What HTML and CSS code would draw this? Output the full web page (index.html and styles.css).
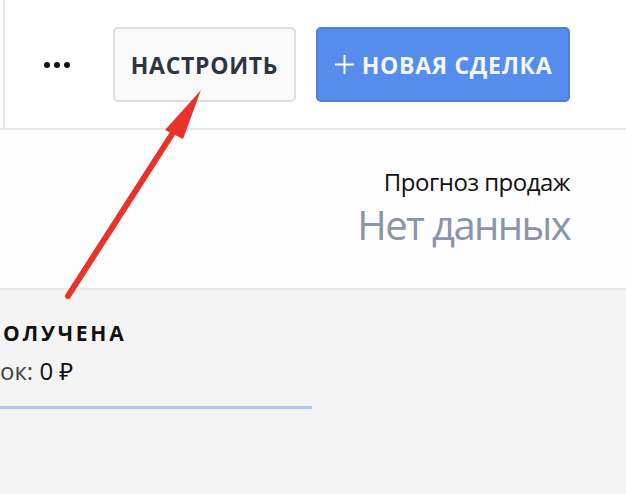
FILE: index.html
```html
<!DOCTYPE html>
<html lang="ru">
<head>
<meta charset="utf-8">
<link rel="stylesheet" href="styles.css">
</head>
<body>
<div class="page">
  <header class="topbar">
    <div class="topbar-inner">
      <button class="more" aria-label="Ещё"><span></span><span></span><span></span></button>
      <button class="btn btn-setup">НАСТРОИТЬ</button>
      <button class="btn btn-new"><svg class="plus" width="21" height="21" viewBox="0 0 21 21"><path d="M10.5 1v19M1 10.5h19" stroke="#fff" stroke-width="2"/></svg>НОВАЯ СДЕЛКА</button>
    </div>
  </header>
  <section class="summary">
    <div class="forecast">
      <div class="forecast-label">Прогноз продаж</div>
      <div class="forecast-value">Нет данных</div>
    </div>
  </section>
  <section class="board">
    <div class="column">
      <div class="column-title">ОЛУЧЕНА</div>
      <div class="column-sum">ок: <span class="sum-val">0 ₽</span></div>
      <div class="column-bar"></div>
    </div>
  </section>
  <svg class="arrow" width="626" height="494" viewBox="0 0 626 494">
    <path d="M68 296 L176 128" stroke="#e8322a" stroke-width="6" stroke-linecap="round" fill="none"/>
    <path d="M201 90 L165 130 L183 139 Z" fill="#e8322a"/>
  </svg>
</div>
</body>
</html>
```
FILE: styles.css
```css
* { box-sizing: border-box; }
html, body { margin: 0; padding: 0; }
body {
  width: 626px;
  height: 494px;
  overflow: hidden;
  font-family: "Open Sans", "Noto Sans", sans-serif;
  background: #f4f4f4;
}
.page { position: relative; width: 626px; height: 494px; }
.topbar {
  height: 130px;
  background: #fff;
  border-bottom: 2px solid #e8e8e8;
  padding-left: 3px;
}
.topbar-inner {
  height: 100%;
  border-left: 2px solid #e8e8e8;
  display: flex;
  align-items: center;
  justify-content: flex-end;
  padding-right: 56px;
  padding-top: 1px;
}
.more {
  display: flex;
  gap: 4px;
  background: none;
  border: 0;
  padding: 0;
  margin-right: 43px;
  cursor: pointer;
}
.more span {
  width: 6px; height: 6px;
  border-radius: 50%;
  background: #111;
}
.btn {
  height: 75px;
  border-radius: 5px;
  font-family: "Open Sans", sans-serif;
  font-weight: 700;
  font-size: 23px;
  letter-spacing: 0.7px;
  display: flex;
  align-items: center;
  cursor: pointer;
  padding: 0;
}
.btn-setup {
  width: 183px;
  justify-content: center;
  background: #fafafa;
  border: 2px solid #dedede;
  color: #2e3440;
  margin-right: 20px;
}
.btn-new {
  width: 254px;
  justify-content: center;
  background: #568ded;
  border: 2px solid #4c80dc;
  color: #f3f6fb;
  gap: 7px;
}
.plus { flex: none; }
.summary {
  height: 160px;
  background: #fdfdfd;
  border-bottom: 2px solid #e8e8e8;
  display: flex;
  justify-content: flex-end;
  padding-right: 56px;
  padding-top: 37px;
}
.forecast { text-align: right; }
.forecast-label {
  font-size: 24px;
  color: #111;
  line-height: 30px;
  letter-spacing: -0.5px;
}
.forecast-value {
  margin-top: 5px;
  font-size: 40px;
  color: #8a95a8;
  line-height: 46px;
  letter-spacing: -1.6px;
}
.board { padding-top: 30px; }
.column { width: 312px; }
.column-title {
  font-weight: 700;
  font-size: 21px;
  letter-spacing: 2.8px;
  color: #111;
  line-height: 26px;
  padding-left: 3px;
}
.column-sum {
  margin-top: 10px;
  font-size: 24px;
  color: #444;
  line-height: 30px;
}
.sum-val { color: #111; }
.column-bar {
  margin-top: 20px;
  height: 3px;
  background: #a8cbf5;
}
.arrow { position: absolute; left: 0; top: 0; pointer-events: none; }
```
